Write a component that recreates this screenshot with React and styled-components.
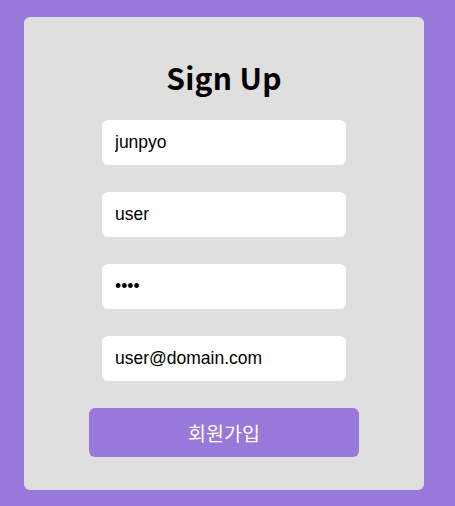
import styled, { createGlobalStyle } from "styled-components";

// ---------- Global ----------
const GlobalStyle = createGlobalStyle`
  html, body {
    margin: 0;
    padding: 0;
    background-color: #9878db;
  }

  body {
    font-family: "Liberation Sans", Arial, sans-serif;
  }
`;

// ---------- Styled components ----------
const Page = styled.div`
  min-height: 506px;
  box-sizing: border-box;
  padding: 17px 31px 16px 24px;
`;

const Card = styled.form`
  width: 400px;
  height: 473px;
  box-sizing: border-box;
  padding: 38px 0 0;
  background-color: #dfdfdf;
  border-radius: 6px;
  display: flex;
  flex-direction: column;
  align-items: center;
`;

const Title = styled.h1`
  margin: 0 0 21px;
  font-family: "Noto Sans CJK KR", "Noto Sans", sans-serif;
  font-size: 30px;
  font-weight: 700;
  line-height: 44px;
  letter-spacing: 0.3px;
  color: #000;
`;

const Fields = styled.div`
  display: flex;
  flex-direction: column;
  align-items: center;
  gap: 27px;
`;

const Input = styled.input`
  width: 244px;
  height: 45px;
  box-sizing: border-box;
  padding: 0 13px;
  border: none;
  border-radius: 6px;
  background-color: #fff;
  font-family: "Liberation Sans", Arial, sans-serif;
  font-size: 17.5px;
  color: #000;
  outline: none;
`;

const Button = styled.button`
  width: 270px;
  height: 49px;
  border: none;
  border-radius: 6px;
  background-color: #9878db;
  color: #fff;
  font-family: "Noto Sans CJK KR", sans-serif;
  font-size: 19.5px;
  cursor: pointer;
`;

// ---------- Component ----------
const App = () => {
  const fields = [
    { type: "text", value: "junpyo" },
    { type: "text", value: "user" },
    { type: "password", value: "1234" },
    { type: "email", value: "user@domain.com" },
  ];

  return (
    <Page>
      <GlobalStyle />
      <Card onSubmit={(e) => e.preventDefault()}>
        <Title>Sign Up</Title>
        <Fields>
          {fields.map((field, index) => (
            <Input key={index} type={field.type} defaultValue={field.value} />
          ))}
          <Button type="submit">회원가입</Button>
        </Fields>
      </Card>
    </Page>
  );
};

export default App;
